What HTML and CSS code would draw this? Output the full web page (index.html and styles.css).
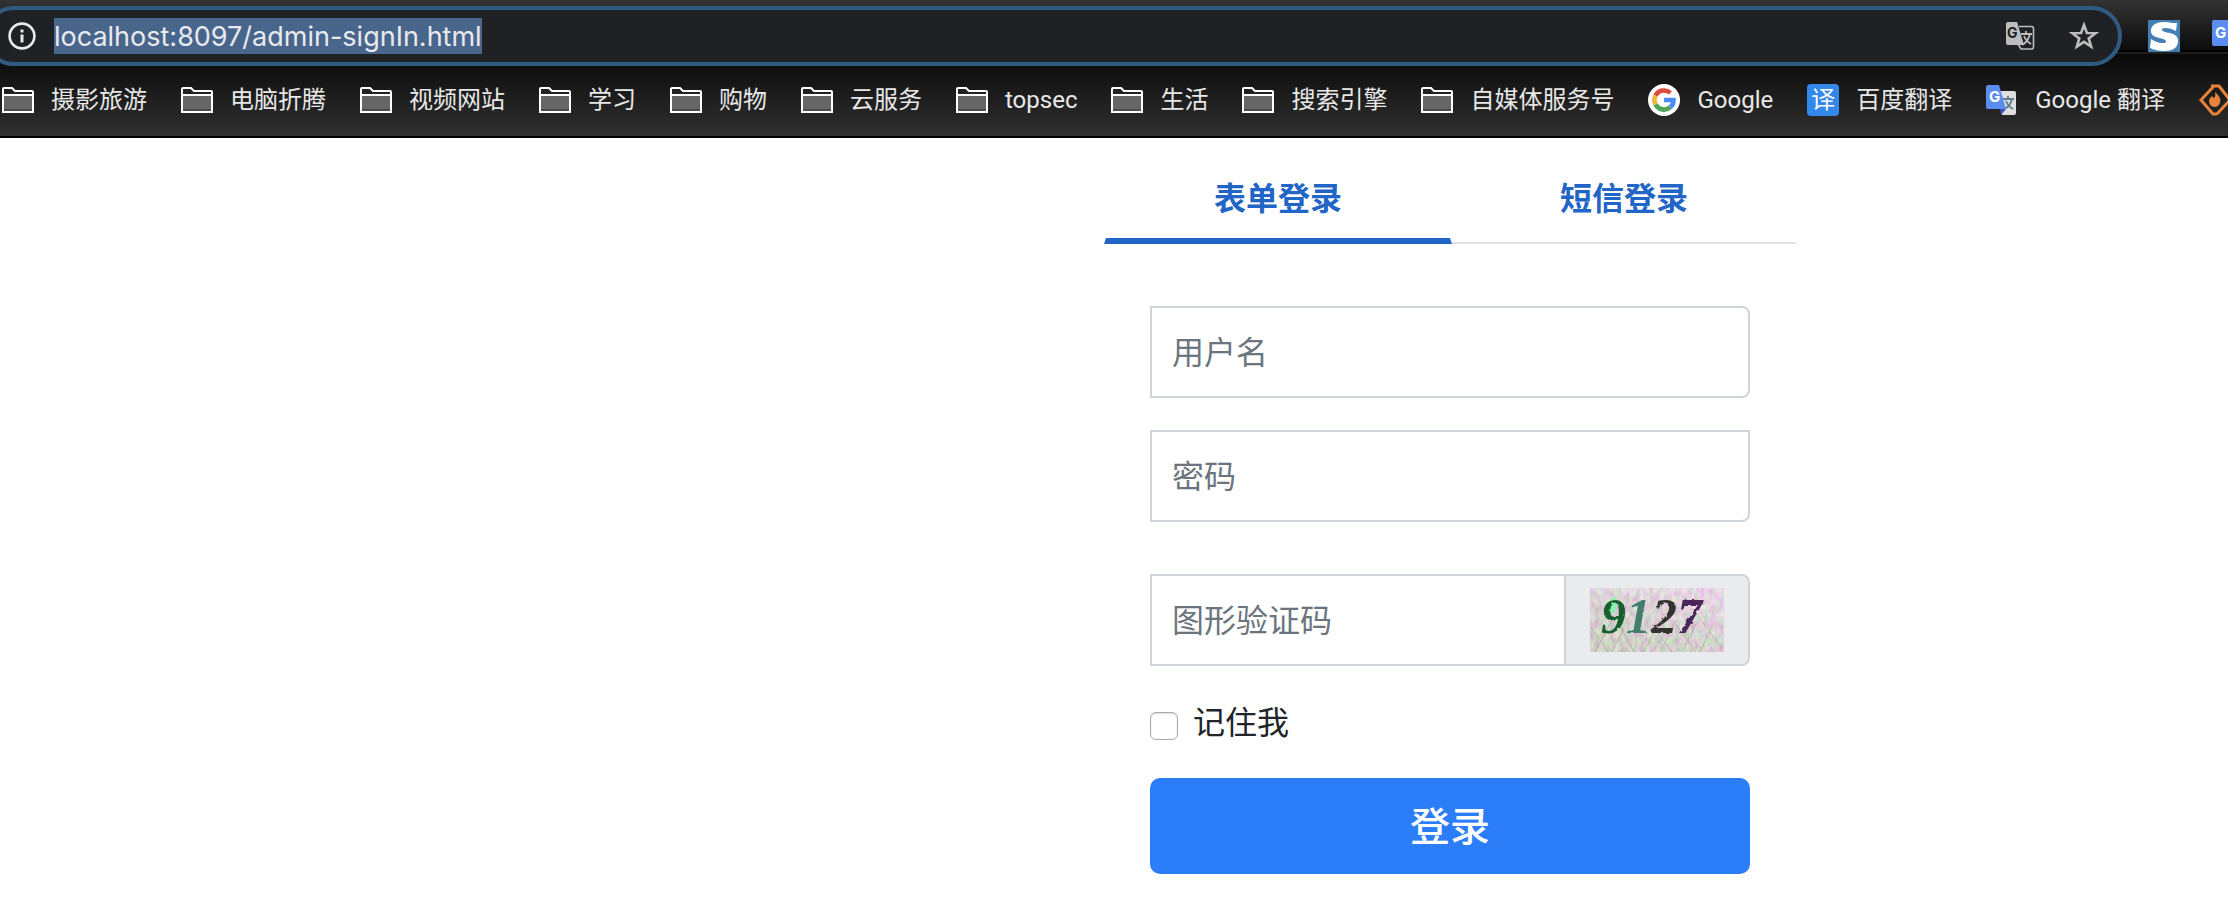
FILE: index.html
```html
<!DOCTYPE html>
<html lang="zh-CN">
<head>
<meta charset="utf-8">
<title>登录</title>
<link rel="stylesheet" href="styles.css">
</head>
<body>
<svg class="defs" aria-hidden="true">
  <symbol id="folder" viewBox="0 0 32 26">
    <path d="M1 25V2q0-1 1-1h8l3 3h17q1 0 1 1v20z" fill="#222"/>
    <path d="M1 8h30v17H1z" fill="#666"/>
    <path d="M1 22h30v2H1z" fill="#4c4c4c"/>
    <path d="M1 25V2q0-1 1-1h8l3 3h17q1 0 1 1v20zM1 8h30" fill="none" stroke="#fff" stroke-width="2"/>
  </symbol>
  <symbol id="translate" viewBox="0 0 32 32">
    <path d="M12 7h16q2 0 2 2v20q0 2-2 2H16z" fill="#dedede"/>
    <path d="M17 15h11M22 12v3M26 15q-2 8-8 10M20 17q2 5 7 8" fill="none" stroke="#607d8b" stroke-width="1.800"/>
    <path d="M14 25h6l-5 6z" fill="#3c50b8"/>
    <path d="M2 1h11l7 24H2q-2 0-2-2V3q0-2 2-2z" fill="#5b8df0"/>
    <text x="3" y="18" font-size="15" class="glyph" font-weight="700" fill="#fff">G</text>
  </symbol>
</svg>
<header class="browser">
  <div class="toolbar">
    <div class="omnibox">
      <svg class="info" viewBox="0 0 28 28"><circle cx="14" cy="14" r="12.4" fill="none" stroke="#e8eaed" stroke-width="2.6"/><path d="M14 12.500v8M14 7.500v3" stroke="#e8eaed" stroke-width="3"/></svg>
      <input class="url" type="text" aria-label="地址" value="localhost:8097/admin-signIn.html">
      <div class="omni-actions">
        <button class="icon-btn" aria-label="翻译">
          <svg width="30" height="30" viewBox="0 0 30 30"><path d="M14 5.500h12.500q2 0 2 2V26q0 2-2 2H16l-3-5" fill="none" stroke="#bdbdbd" stroke-width="1.600"/><path d="M3 1h9l7 23H3q-2 0-2-2V3q0-2 2-2z" fill="#bdbdbd"/><text x="2" y="17" font-size="14" font-weight="700" class="glyph" fill="#202124">G</text><path d="M16 13h11M21 10v3M25 13q-2 8-8 11M19 15q2 5 7 8" fill="none" stroke="#bdbdbd" stroke-width="1.800"/></svg>
        </button>
        <button class="icon-btn" aria-label="收藏">
          <svg width="30" height="30" viewBox="0 0 30 30"><path d="M15 4l2.900 8 8.600.2-6.800 5.200 2.500 8.300L15 20.900l-7.200 4.800 2.500-8.300-6.800-5.200 8.600-.2z" fill="none" stroke="#bdbdbd" stroke-width="2.600"/></svg>
        </button>
      </div>
    </div>
    <div class="extensions">
      <svg class="ext" viewBox="0 0 32 32"><path d="M0 0h32v32H0z" fill="#437fb3"/><path d="M29 3l-1 8q-5-3-10-3-5 0-4 2 1 2 8 3 9 2 8 9-1 9-14 9-8 0-14-3l1-9q6 4 11 4 5 0 4-2-1-2-7-3-9-2-8-8Q4 2 16 2q5 0 8 1z" fill="#fff"/></svg>
      <svg class="ext" viewBox="0 0 32 32"><path d="M2 0h14l8 26H2q-2 0-2-2V2q0-2 2-2z" fill="#5b8df0"/><text x="3" y="18" font-size="15" class="glyph" font-weight="700" fill="#fff">G</text></svg>
    </div>
  </div>
  <nav class="bookmarks">
    <a href="#"><svg class="folder"><use href="#folder"/></svg>摄影旅游</a>
    <a href="#"><svg class="folder"><use href="#folder"/></svg>电脑折腾</a>
    <a href="#"><svg class="folder"><use href="#folder"/></svg>视频网站</a>
    <a href="#"><svg class="folder"><use href="#folder"/></svg>学习</a>
    <a href="#"><svg class="folder"><use href="#folder"/></svg>购物</a>
    <a href="#"><svg class="folder"><use href="#folder"/></svg>云服务</a>
    <a href="#"><svg class="folder"><use href="#folder"/></svg>topsec</a>
    <a href="#"><svg class="folder"><use href="#folder"/></svg>生活</a>
    <a href="#"><svg class="folder"><use href="#folder"/></svg>搜索引擎</a>
    <a href="#"><svg class="folder"><use href="#folder"/></svg>自媒体服务号</a>
    <a href="#"><svg class="site" viewBox="0 0 32 32"><circle cx="16" cy="16" r="16" fill="#fff"/><g fill="none" stroke-width="4.600"><path d="M22.400 8.900A9.600 9.600 0 0 0 7.500 11.600" stroke="#db4c3f"/><path d="M7.500 11.600a9.600 9.600 0 0 0 0 8.800" stroke="#f4b73b"/><path d="M7.500 20.400a9.600 9.600 0 0 0 14.800 2.800" stroke="#4fa65a"/><path d="M22.300 23.200q3.400-3 3.200-7.200H16" stroke="#4c8bf5"/></g></svg>Google</a>
    <a href="#"><span class="site badge">译</span>百度翻译</a>
    <a href="#"><svg class="site"><use href="#translate"/></svg>Google 翻译</a>
    <a href="#" aria-label="书签"><svg class="site" viewBox="0 0 32 32"><path d="M20 2h-5L2 16l12 14h4M12 2h4M16 2h4l11 14-13 14" fill="none" stroke="#e8833a" stroke-width="3"/><path d="M16 8q7 6 5 11-2 4-5 4-5 0-6-5 0-4 3-6 1 2 2 2 2-2 1-6z" fill="#e8833a"/></svg></a>
  </nav>
</header>
<main class="login">
  <div class="tabs" role="tablist">
    <button class="tab active" role="tab" aria-selected="true">表单登录</button>
    <button class="tab" role="tab" aria-selected="false">短信登录</button>
  </div>
  <form class="form">
    <input class="field" type="text" placeholder="用户名" aria-label="用户名">
    <input class="field second" type="password" placeholder="密码" aria-label="密码">
    <div class="captcha-row">
      <input class="field code" type="text" placeholder="图形验证码" aria-label="图形验证码">
      <div class="captcha">
        <svg width="134" height="64" viewBox="0 0 134 64" role="img" aria-label="验证码">
          <defs>
            <filter id="noise" x="0" y="0" width="100%" height="100%"><feTurbulence type="fractalNoise" baseFrequency="0.2 0.12" numOctaves="3" seed="7"/><feColorMatrix values="1 0 0 0 0.26  0 1.3 0 0 0.07  0.7 0 0.4 0 0.17  0 0 0 0 1"/></filter>
            <filter id="rough" x="-10%" y="-10%" width="120%" height="120%"><feTurbulence type="fractalNoise" baseFrequency="0.2" numOctaves="1" seed="3"/><feDisplacementMap in="SourceGraphic" scale="3"/></filter>
            <linearGradient id="tint" x1=".3" y1="1" x2=".9" y2="0"><stop offset="0" stop-color="#c0c4b2"/><stop offset=".5" stop-color="#d2c9cc"/><stop offset="1" stop-color="#efcff0"/></linearGradient>
          </defs>
          <path d="M0 0h134v64H0z" filter="url(#noise)"/>
          <path d="M0 0h134v64H0z" fill="url(#tint)" opacity=".5"/>
          <path d="M5 64l18-34M22 64l20-40M44 64L30 38M54 64l14-28M70 64l16-32M62 38l20 26M92 64l14-28M86 36l20 28M110 64l12-26M102 20l30 40M0 38l18 26" stroke="#8fa17e" fill="none" opacity=".5"/>
          <path d="M19 25q-3-10 6-17 5 10-2 18z" fill="#8dedaa"/>
          <g class="digits" filter="url(#rough)"><text x="11" y="45" fill="#17602f">9</text><text x="36" y="45" fill="#427d6d">1</text><text x="62" y="45" fill="#363333">2</text><text x="87" y="45" fill="#4b2859">7</text></g>
        </svg>
      </div>
    </div>
    <label class="remember"><input type="checkbox"><span>记住我</span></label>
    <button class="submit" type="submit">登录</button>
  </form>
</main>
</body>
</html>
```
FILE: styles.css
```css
* { box-sizing: border-box; }

body {
  margin: 0;
  background: #fff;
  color: #212529;
  font-family: Inter, "Noto Sans CJK SC", sans-serif;
  overflow-x: hidden;
}

input, button { font-family: inherit; margin: 0; }

.defs { display: none; }
.glyph { font-family: Inter, "Noto Sans CJK SC", sans-serif; }

/* Browser chrome */
.browser {
  border-bottom: 2px solid #000;
  background: linear-gradient(#333 0, #0c0c0c 50px, #000 50px, #000 52px, #1f1f1f 52px, #1f1f1f 54px, #090909 54px, #303030 100%);
  overflow: hidden;
}

.toolbar {
  display: flex;
  gap: 26px;
  padding-top: 6px;
}

.omnibox {
  flex: 1;
  display: flex;
  align-items: center;
  height: 60px;
  margin-left: -16px;
  padding: 0 19px 0 20px;
  border: 4px solid #2f5b80;
  border-radius: 30px;
  background: #202124;
}

.info { width: 28px; height: 28px; margin-right: 18px; }

.url {
  field-sizing: content;
  height: 36px;
  padding: 0;
  border: 0;
  background: #48658b;
  color: #e8eaed;
  font-size: 27px;
}

.omni-actions {
  display: flex;
  gap: 34px;
  margin-left: auto;
}

.icon-btn {
  display: flex;
  padding: 0;
  border: 0;
  background: none;
}

.extensions {
  display: flex;
  gap: 32px;
  width: 80px;
  padding-top: 14px;
}

.ext { flex: none; width: 32px; height: 32px; }

.bookmarks {
  display: flex;
  gap: 34px;
  padding: 16px 0 18px 2px;
}

.bookmarks a {
  flex: none;
  display: flex;
  align-items: center;
  gap: 17px;
  height: 36px;
  color: #e8e8e8;
  font-family: Roboto, "Noto Sans CJK SC", sans-serif;
  font-size: 24px;
  line-height: 36px;
  text-decoration: none;
  white-space: nowrap;
}

.folder { width: 32px; height: 26px; }
.site { width: 32px; height: 32px; }

.badge {
  border-radius: 4px;
  background: #3487eb;
  color: #fff;
  line-height: 32px;
  text-align: center;
}

/* Login panel */
.login {
  width: 692px;
  max-width: 100%;
  margin-left: calc(50% - 10px);
}

.tabs {
  display: flex;
  padding-top: 14px;
}

.tab {
  flex: 1 1 0;
  height: 92px;
  padding: 0 0 2px;
  border: 0 solid transparent;
  border-bottom: 2px solid #dee2e6;
  background: none;
  color: #2165c6;
  font-size: 32px;
  font-weight: 700;
}

.tab.active {
  padding: 2px 0 0;
  border-width: 0 2px 6px;
  border-bottom-color: #2165c6;
}

.form {
  display: flex;
  flex-direction: column;
  padding: 62px 46px 30px;
}

.field {
  width: 100%;
  height: 92px;
  padding: 0 20px;
  border: 2px solid #ced4da;
  border-radius: 0 8px 8px 0;
  background: #fff;
  color: #495057;
  font-size: 32px;
}

.field::placeholder { color: #6c757d; opacity: 1; }

.second { margin-top: 32px; border-radius: 0 0 8px 0; }

.captcha-row { display: flex; margin-top: 52px; }

.code { flex: 1; min-width: 0; border-right: 0; border-radius: 0; }

.captcha {
  display: flex;
  align-items: center;
  padding: 0 24px;
  border: 2px solid #ced4da;
  border-radius: 0 8px 8px 0;
  background: #eaebef;
}

.digits {
  font-family: "Liberation Serif", serif;
  font-size: 50px;
  font-style: italic;
  font-weight: 700;
}

.remember {
  display: flex;
  align-items: center;
  align-self: flex-start;
  gap: 15px;
  height: 48px;
  margin-top: 33px;
  font-size: 32px;
  line-height: 48px;
}

.remember input {
  appearance: none;
  width: 28px;
  height: 28px;
  margin: 6px 0 0;
  border: 1px solid #a9a9a9;
  border-radius: 6px;
  background: #fff;
  box-shadow: inset 0 1px 2px #ddd;
}

.submit {
  height: 96px;
  margin-top: 31px;
  padding: 0 0 4px;
  border: 0;
  border-radius: 10px;
  background: #2b7df8;
  color: #fff;
  font-size: 40px;
  font-weight: 500;
}
```
